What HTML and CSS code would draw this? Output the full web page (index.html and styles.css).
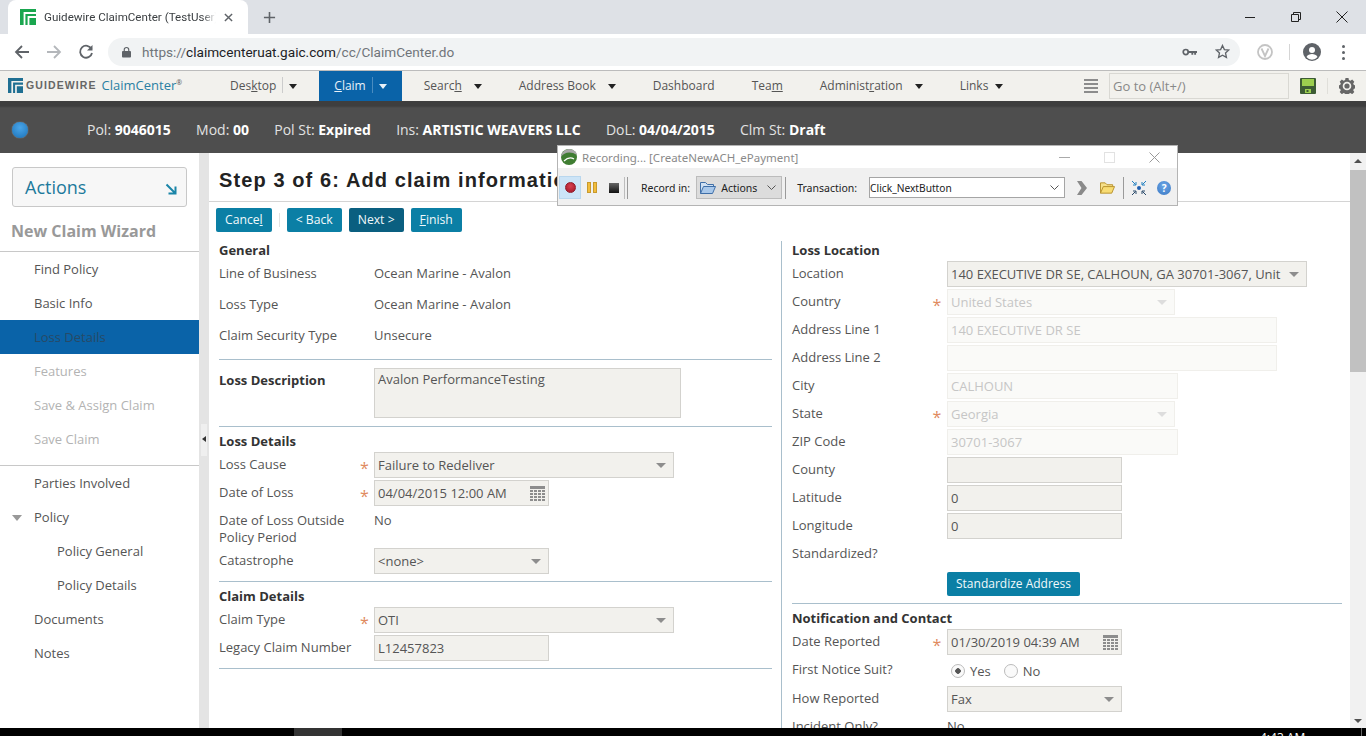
FILE: index.html
```html
<!DOCTYPE html>
<html lang="en">
<head>
    <meta charset="UTF-8">
    <title>Guidewire ClaimCenter (TestUser)</title>
    <link rel="stylesheet" href="styles.css">
</head>
<body>
    <div class="browser-tabs">
        <div class="tab">
            <svg class="favicon" viewBox="0 0 16 16"><rect width="16" height="16" fill="#1aa64f"/><path d="M16 4H4.500V16M8.500 16V8H16" fill="none" stroke="#fff" stroke-width="1.800"/></svg>
            <span class="tab-title">Guidewire ClaimCenter (TestUser)</span>
            <svg class="tab-close" viewBox="0 0 10 10"><path d="M1 1l8 8M9 1l-8 8" stroke="#5f6368" stroke-width="1.600"/></svg>
        </div>
        <svg class="tab-new" viewBox="0 0 14 14"><path d="M7 1v12M1 7h12" stroke="#5f6368" stroke-width="1.700"/></svg>
        <div class="window-btns">
            <svg viewBox="0 0 12 12"><path d="M1 6.500h10" stroke="#222" stroke-width="1"/></svg>
            <svg viewBox="0 0 12 12"><path d="M1.500 3.500h7v7h-7zM3.500 3.500v-2h7v7h-2" fill="none" stroke="#222"/></svg>
            <svg viewBox="0 0 12 12"><path d="M.5.5l11 11M11.500.5l-11 11" stroke="#222"/></svg>
        </div>
    </div>

    <div class="browser-bar">
        <svg class="nav-icon" viewBox="0 0 16 16"><path d="M15 8H2M8 2L2 8l6 6" fill="none" stroke="#5f6368" stroke-width="1.800"/></svg>
        <svg class="nav-icon" viewBox="0 0 16 16"><path d="M1 8h13M8 2l6 6-6 6" fill="none" stroke="#b4b7bb" stroke-width="1.800"/></svg>
        <svg class="nav-icon" viewBox="0 0 16 16"><path d="M13.500 5A6 6 0 1 0 14 9" fill="none" stroke="#5f6368" stroke-width="1.800"/><path d="M14.500 1v5.500H9z" fill="#5f6368"/></svg>
        <div class="omnibox">
            <svg class="lock" viewBox="0 0 10 12"><path d="M2.500 5V3.500a2.500 2.500 0 0 1 5 0V5" fill="none" stroke="#5f6368" stroke-width="1.300"/><rect y="5" width="10" height="7" rx="1" fill="#5f6368"/></svg>
            <span class="url"><span class="url-dim">https://</span>claimcenteruat.gaic.com<span class="url-dim">/cc/ClaimCenter.do</span></span>
            <svg class="key" viewBox="0 0 16 8"><circle cx="4" cy="4" r="2.700" fill="none" stroke="#5f6368" stroke-width="1.800"/><path d="M6 3h10v2h-1v2h-2V5h-1v2h-2V5H6z" fill="#5f6368"/></svg>
            <svg class="bookmark" viewBox="0 0 16 16"><path d="M8 1.500l2 4.400 4.700.5-3.500 3.200 1 4.700L8 11.900l-4.200 2.400 1-4.700L1.300 6.400 6 5.900z" fill="none" stroke="#5f6368" stroke-width="1.400"/></svg>
        </div>
        <svg class="ext" viewBox="0 0 16 16"><circle cx="8" cy="8" r="7" fill="none" stroke="#c4c4c4" stroke-width="1.800"/><path d="M4.500 4.500L8 12l3.500-7.500" fill="none" stroke="#c4c4c4" stroke-width="1.800"/></svg>
        <div class="bar-sep"></div>
        <svg class="avatar" viewBox="0 0 18 18"><circle cx="9" cy="9" r="9" fill="#5f6368"/><circle cx="9" cy="7" r="3" fill="#fff"/><path d="M3.500 14c1-2.300 3.300-3 5.500-3s4.500.7 5.500 3a7 7 0 0 1-11 0z" fill="#fff"/></svg>
        <div class="dots"><i></i><i></i><i></i></div>
    </div>

    <div class="app-nav">
        <div class="brand">
            <svg class="brand-logo" viewBox="0 0 16 16"><rect width="16" height="16" fill="#1f6f92"/><path d="M16 4H4.500V16M8.500 16V8H16" fill="none" stroke="#f2f1ed" stroke-width="1.800"/></svg>
            <span class="brand-gw">GUIDEWIRE</span>
            <span class="brand-cc">ClaimCenter<sup>®</sup></span>
        </div>
        <div class="nav-item"><span>Des<u>k</u>top</span><i class="nav-sep"></i><i class="nav-arrow"></i></div>
        <div class="nav-item active"><span><u>C</u>laim</span><i class="nav-sep"></i><i class="nav-arrow"></i></div>
        <div class="nav-item"><span>Searc<u>h</u></span><i class="nav-arrow"></i></div>
        <div class="nav-item"><span>Address Book</span><i class="nav-arrow"></i></div>
        <div class="nav-item"><span>Dashboard</span></div>
        <div class="nav-item"><span>Tea<u>m</u></span></div>
        <div class="nav-item"><span>Administ<u>r</u>ation</span><i class="nav-arrow"></i></div>
        <div class="nav-item short"><span>Links</span><i class="nav-arrow"></i></div>
        <div class="nav-right">
            <div class="lines"><i></i><i></i><i></i><i></i></div>
            <div class="goto">Go to (Alt+/)</div>
            <svg class="save" viewBox="0 0 16 16"><path d="M0 1a1 1 0 0 1 1-1h14a1 1 0 0 1 1 1v14a1 1 0 0 1-1 1H1a1 1 0 0 1-1-1z" fill="#3d5c35"/><rect x="2" y="1" width="12" height="7" fill="#9ccf4f"/><rect x="5" y="11" width="6" height="4" fill="#9ccf4f"/><rect x="6.500" y="12" width="2" height="2" fill="#3d5c35"/></svg>
            <i class="nav-sep gear-sep"></i>
            <svg class="gear" viewBox="0 0 16 16"><path d="M6.500 0h3l.4 2 1.500.7 1.800-1.100 2.100 2.100-1.100 1.800.7 1.500 2 .4v3l-2 .4-.7 1.500 1.100 1.800-2.100 2.100-1.800-1.100-1.500.7-.4 2h-3l-.4-2-1.500-.7-1.800 1.100-2.100-2.100 1.100-1.800-.7-1.500-2-.4v-3l2-.4.7-1.500-1.100-1.800 2.100-2.100 1.800 1.100 1.500-.7z" fill="#666"/><circle cx="8" cy="8" r="4.300" fill="#f2f1ed"/><circle cx="8" cy="8" r="2.600" fill="#666"/></svg>
        </div>
    </div>

    <div class="info-bar">
        <i class="ball"></i>
        <div class="info-items">
            <span>Pol: <b>9046015</b></span>
            <span>Mod: <b>00</b></span>
            <span>Pol St: <b>Expired</b></span>
            <span>Ins: <b>ARTISTIC WEAVERS LLC</b></span>
            <span>DoL: <b>04/04/2015</b></span>
            <span>Clm St: <b>Draft</b></span>
        </div>
    </div>

    <div class="workspace">
        <div class="sidebar">
            <div class="actions-btn">
                <span>Actions</span>
                <svg viewBox="0 0 12 12"><path d="M1.500 1.500l8 8M10.500 3.500v7h-7" fill="none" stroke="#1a85a8" stroke-width="2"/></svg>
            </div>
            <div class="wizard-title">New Claim Wizard</div>
            <div class="side-group">
                <div class="side-item">Find Policy</div>
                <div class="side-item">Basic Info</div>
                <div class="side-item selected">Loss Details</div>
                <div class="side-item off">Features</div>
                <div class="side-item off">Save &amp; Assign Claim</div>
                <div class="side-item off">Save Claim</div>
            </div>
            <div class="side-item">Parties Involved</div>
            <div class="side-item"><i class="tree-arrow"></i>Policy</div>
            <div class="side-item sub">Policy General</div>
            <div class="side-item sub">Policy Details</div>
            <div class="side-item">Documents</div>
            <div class="side-item">Notes</div>
        </div>

        <div class="splitter"><div class="grip"></div></div>

        <div class="main">
            <h1 class="page-title">Step 3 of 6: Add claim information</h1>
            <div class="button-row">
                <button class="btn">Cance<u>l</u></button>
                <i class="btn-sep"></i>
                <button class="btn">&lt; Back</button>
                <button class="btn primary">Next &gt;</button>
                <button class="btn"><u>F</u>inish</button>
            </div>
            <div class="columns">
                <div class="col-left">
                    <div class="section first">
                        <h2>General</h2>
                        <div class="row tall"><label>Line of Business</label><span class="req"></span><span>Ocean Marine - Avalon</span></div>
                        <div class="row tall"><label>Loss Type</label><span class="req"></span><span>Ocean Marine - Avalon</span></div>
                        <div class="row tall"><label>Claim Security Type</label><span class="req"></span><span>Unsecure</span></div>
                    </div>
                    <div class="section desc">
                        <div class="row"><label class="bold">Loss Description</label><span class="req"></span><div class="field textarea w307">Avalon PerformanceTesting</div></div>
                    </div>
                    <div class="section">
                        <h2>Loss Details</h2>
                        <div class="row"><label>Loss Cause</label><span class="req">*</span><div class="field select w300">Failure to Redeliver</div></div>
                        <div class="row"><label>Date of Loss</label><span class="req">*</span>
                            <div class="field date w175">04/04/2015 12:00 AM
                                <svg class="cal" viewBox="0 0 15 15"><path d="M0 0h15v3H0zM0 4h3v2H0zM4 4h3v2H4zM8 4h3v2H8zM12 4h3v2h-3zM0 7h3v2H0zM4 7h3v2H4zM8 7h3v2H8zM12 7h3v2h-3zM0 10h3v2H0zM4 10h3v2H4zM8 10h3v2H8zM12 10h3v2h-3zM0 13h3v2H0zM4 13h3v2H4zM8 13h3v2H8zM12 13h3v2h-3z" fill="#8d8d8d"/></svg>
                            </div>
                        </div>
                        <div class="row two-line"><label>Date of Loss Outside<br>Policy Period</label><span class="req"></span><span>No</span></div>
                        <div class="row"><label>Catastrophe</label><span class="req"></span><div class="field select w175">&lt;none&gt;</div></div>
                    </div>
                    <div class="section">
                        <h2>Claim Details</h2>
                        <div class="row"><label>Claim Type</label><span class="req">*</span><div class="field select w300">OTI</div></div>
                        <div class="row"><label>Legacy Claim Number</label><span class="req"></span><div class="field w175">L12457823</div></div>
                    </div>
                </div>

                <div class="col-right">
                    <div class="section first">
                        <h2 class="loc-head">Loss Location</h2>
                        <div class="row"><label>Location</label><span class="req"></span><div class="field select w360">140 EXECUTIVE DR SE, CALHOUN, GA 30701-3067, Unit</div></div>
                        <div class="row"><label>Country</label><span class="req">*</span><div class="field select off w228">United States</div></div>
                        <div class="row"><label>Address Line 1</label><span class="req"></span><div class="field off w330">140 EXECUTIVE DR SE</div></div>
                        <div class="row"><label>Address Line 2</label><span class="req"></span><div class="field off w330"></div></div>
                        <div class="row"><label>City</label><span class="req"></span><div class="field off w231">CALHOUN</div></div>
                        <div class="row"><label>State</label><span class="req">*</span><div class="field select off w228">Georgia</div></div>
                        <div class="row"><label>ZIP Code</label><span class="req"></span><div class="field off w231">30701-3067</div></div>
                        <div class="row"><label>County</label><span class="req"></span><div class="field w175"></div></div>
                        <div class="row"><label>Latitude</label><span class="req"></span><div class="field w175">0</div></div>
                        <div class="row"><label>Longitude</label><span class="req"></span><div class="field w175">0</div></div>
                        <div class="row"><label>Standardized?</label></div>
                        <div class="row btn-line"><label></label><span class="req"></span><button class="btn">Standardize Address</button></div>
                    </div>
                    <div class="section">
                        <h2>Notification and Contact</h2>
                        <div class="row"><label>Date Reported</label><span class="req">*</span>
                            <div class="field date w175">01/30/2019 04:39 AM
                                <svg class="cal" viewBox="0 0 15 15"><path d="M0 0h15v3H0zM0 4h3v2H0zM4 4h3v2H4zM8 4h3v2H8zM12 4h3v2h-3zM0 7h3v2H0zM4 7h3v2H4zM8 7h3v2H8zM12 7h3v2h-3zM0 10h3v2H0zM4 10h3v2H4zM8 10h3v2H8zM12 10h3v2h-3zM0 13h3v2H0zM4 13h3v2H4zM8 13h3v2H8zM12 13h3v2h-3z" fill="#8d8d8d"/></svg>
                            </div>
                        </div>
                        <div class="row radios"><label>First Notice Suit?</label><span class="req"></span>
                            <i class="radio checked"></i><span class="radio-text">Yes</span>
                            <i class="radio"></i><span>No</span>
                        </div>
                        <div class="row"><label>How Reported</label><span class="req"></span><div class="field select w175">Fax</div></div>
                        <div class="row"><label>Incident Only?</label><span class="req"></span><span>No</span></div>
                    </div>
                </div>
            </div>
        </div>

        <div class="scrollbar">
            <i class="sb-up"></i>
            <div class="sb-thumb"></div>
            <i class="sb-down"></i>
        </div>
    </div>

    <div class="taskbar">
        <div class="task-active"></div>
        <span class="clock">4:43 AM</span>
        <i class="task-edge"></i>
    </div>

    <!-- floating recorder window -->
    <div class="recorder">
        <div class="rec-title">
            <svg class="rec-logo" viewBox="0 0 16 16"><circle cx="8" cy="8" r="8" fill="#3f7d32"/><path d="M0 8c3-5 10-6 16-2 0-3-4-6-8-6S0 4 0 8z" fill="#a8a8a8"/><path d="M3 12c3-3 7-4 10-2" fill="none" stroke="#fff" stroke-width="1.200"/></svg>
            <span>Recording... [CreateNewACH_ePayment]</span>
            <div class="rec-win">
                <svg viewBox="0 0 11 11"><path d="M0 5.500h11" stroke="#aaa"/></svg>
                <svg viewBox="0 0 11 11"><rect x=".5" y=".5" width="10" height="10" fill="none" stroke="#e2e2e2"/></svg>
                <svg viewBox="0 0 11 11"><path d="M.5.5l10 10M10.500.5l-10 10" stroke="#999"/></svg>
            </div>
        </div>
        <div class="rec-tools">
            <div class="rec-btn on"><i class="rec-dot"></i></div>
            <div class="rec-btn"><i class="rec-pause"></i><i class="rec-pause"></i></div>
            <div class="rec-btn"><i class="rec-stop"></i></div>
            <i class="rec-sep double"></i>
            <span class="rec-label">Record in:</span>
            <div class="rec-combo">
                <svg class="folder" viewBox="0 0 16 14"><path d="M.5 12.500V1.500h5l2 2h6v2" fill="#cfe0f2" stroke="#3f6fa8"/><path d="M.5 12.500l3-7h12l-3 7z" fill="#a9c8ea" stroke="#3f6fa8"/></svg>
                <span>Actions</span>
                <svg class="chev" viewBox="0 0 9 5"><path d="M.5.500l4 4 4-4" fill="none" stroke="#555"/></svg>
            </div>
            <i class="rec-sep"></i>
            <span class="rec-label trans">Transaction:</span>
            <div class="rec-input">
                <span>Click_NextButton</span>
                <svg class="chev" viewBox="0 0 9 5"><path d="M.5.500l4 4 4-4" fill="none" stroke="#555"/></svg>
            </div>
            <svg class="rec-next" viewBox="0 0 10 16"><path d="M0 1h4.500l5.500 7-5.500 7H0l4.500-7z" fill="#8a8a8a"/></svg>
            <svg class="rec-open" viewBox="0 0 16 14"><path d="M.5 12.500V1.500h5l2 2h6v2" fill="#f6e08a" stroke="#b58f2a"/><path d="M.5 12.500l3-7h12l-3 7z" fill="#f8dc73" stroke="#b58f2a"/></svg>
            <i class="rec-sep last"></i>
            <svg class="rec-focus" viewBox="0 0 16 16"><circle cx="8" cy="8" r="2" fill="#1f5fb0"/><path d="M1 1l3.500 3.500M5 2v3H2M15 1l-3.500 3.500M11 2v3h3" fill="none" stroke="#1f7fc0"/><path d="M1 15l3.500-3.500M5 14v-3H2M15 15l-3.500-3.500M11 14v-3h3" fill="none" stroke="#2a4a6a"/></svg>
            <div class="rec-help">?</div>
        </div>
    </div>
</body>
</html>
```

FILE: styles.css
```css
* {
    box-sizing: border-box;
}

html, body {
    margin: 0;
    padding: 0;
    height: 736px;
    overflow: hidden;
}

body {
    position: relative;
    font-family: "Open Sans", Arial, sans-serif;
    font-size: 13px;
    color: #555;
    background: #fff;
    display: flex;
    flex-direction: column;
}

i {
    display: block;
    font-style: normal;
}

/* browser chrome */
.browser-tabs {
    height: 34px;
    flex: none;
    background: #dee1e6;
    display: flex;
    align-items: center;
}

.tab {
    width: 240px;
    height: 34px;
    margin-left: 8px;
    background: #fff;
    border-radius: 8px 8px 0 0;
    display: flex;
    align-items: center;
    padding-left: 12px;
}

.favicon {
    width: 16px;
    height: 16px;
    flex: none;
}

.tab-title {
    width: 172px;
    margin-left: 8px;
    overflow: hidden;
    white-space: nowrap;
    font-family: Roboto, sans-serif;
    font-size: 11.600px;
    color: #3c4043;
    -webkit-mask-image: linear-gradient(to right, #000 92%, transparent);
    mask-image: linear-gradient(to right, #000 92%, transparent);
}

.tab-close {
    width: 9px;
    height: 9px;
    margin-left: 8px;
}

.tab-new {
    width: 13px;
    height: 13px;
    margin-left: 15px;
}

.window-btns {
    margin-left: auto;
    display: flex;
    gap: 34px;
    padding-right: 18px;
}

.window-btns svg {
    width: 12px;
    height: 12px;
}

.browser-bar {
    height: 37px;
    flex: none;
    background: #fff;
    border-bottom: 1px solid #bcbcbc;
    display: flex;
    align-items: center;
    padding-left: 14px;
}

.nav-icon {
    width: 16px;
    height: 16px;
    margin-right: 16px;
}

.omnibox {
    width: 1132px;
    height: 28px;
    margin-left: -2px;
    margin-top: -1px;
    background: #f1f3f4;
    border-radius: 14px;
    display: flex;
    align-items: center;
    padding-left: 14px;
}

.lock {
    width: 9px;
    height: 12px;
}

.url {
    margin-left: 11px;
    font-family: Roboto, sans-serif;
    font-size: 13.600px;
    color: #202124;
}

.url-dim {
    color: #70757a;
}

.key {
    width: 15px;
    height: 8px;
    margin-left: auto;
}

.bookmark {
    width: 15px;
    height: 15px;
    margin: 0 10px 0 18px;
}

.ext {
    width: 16px;
    height: 16px;
    margin-left: 17px;
}

.bar-sep {
    width: 1px;
    height: 16px;
    background: #d5d5d5;
    margin-left: 16px;
}

.avatar {
    width: 18px;
    height: 18px;
    margin-left: 13px;
}

.dots {
    margin-left: 21px;
}

.dots i {
    width: 3px;
    height: 3px;
    margin: 3px 0;
    background: #5f6368;
    border-radius: 50%;
}

/* app nav */
.app-nav {
    height: 30px;
    flex: none;
    background: #f2f1ed;
    display: flex;
    align-items: stretch;
    gap: 7px;
    padding-right: 11px;
    color: #555;
    font-size: 12px;
}

.brand {
    width: 208px;
    flex: none;
    display: flex;
    align-items: center;
    padding-left: 8px;
    margin-top: -2px;
}

.brand-logo {
    width: 15px;
    height: 15px;
    flex: none;
}

.brand-gw {
    margin-left: 3px;
    font-family: "Liberation Sans", sans-serif;
    font-size: 10.500px;
    font-weight: bold;
    letter-spacing: 1.100px;
    color: #666;
}

.brand-cc {
    margin-left: 5px;
    font-size: 13px;
    color: #2a7fa3;
}

.brand-cc sup {
    font-size: 7px;
    line-height: 0;
    color: #555;
}

.nav-item {
    display: flex;
    align-items: center;
    padding: 0 15px 2px;
    white-space: nowrap;
}

.nav-item.active {
    background: #0a63a8;
    color: #e8f1f8;
}

.nav-sep {
    width: 1px;
    height: 16px;
    background: #ccc;
    margin: 0 6px;
}

.nav-item.active .nav-sep {
    background: #4a8cc0;
}

.nav-arrow {
    width: 0;
    height: 0;
    margin-top: 2px;
    margin-left: 12px;
    border-left: 4px solid transparent;
    border-right: 4px solid transparent;
    border-top: 5px solid #222;
}

.nav-sep + .nav-arrow {
    margin-left: 0;
}

.nav-item.active .nav-arrow {
    border-top-color: #e8f1f8;
}

.nav-item.short .nav-arrow {
    margin-left: 7px;
}

.nav-right {
    margin-left: auto;
    display: flex;
    align-items: center;
}

.lines i {
    width: 14px;
    height: 2px;
    margin: 2px 0;
    background: #8c8c8c;
}

.goto {
    width: 180px;
    height: 26px;
    margin-left: 11px;
    border: 1px solid #d9d8d3;
    background: #f2f1ed;
    padding: 3px 3px;
    color: #888;
    font-size: 13px;
}

.save {
    width: 16px;
    height: 16px;
    margin-left: 11px;
}

.gear-sep {
    margin: 0 11px;
    background: #e0dfda;
}

.gear {
    width: 16px;
    height: 16px;
}

/* policy info bar */
.info-bar {
    height: 52px;
    flex: none;
    background: linear-gradient(#3e3e3e 0, #3e3e3e 5px, #4e4e4e 7px);
    display: flex;
    align-items: center;
    padding: 5px 0 0 12px;
    color: #e2e2e2;
    font-size: 14px;
}

.ball {
    width: 16px;
    height: 16px;
    border-radius: 50%;
    background: radial-gradient(circle at 50% 35%, #4aa5e8, #1b72b8);
    box-shadow: 0 0 1px #bcd;
}

.info-items {
    margin-left: 59px;
    display: flex;
    gap: 25.300px;
}

.info-items b {
    color: #fff;
}

/* page body */
.workspace {
    flex: 1;
    min-height: 0;
    display: flex;
}

.sidebar {
    width: 199px;
    flex: none;
    padding-top: 14px;
    color: #555;
}

.actions-btn {
    width: 175px;
    height: 40px;
    margin-left: 12px;
    background: #f7f7f7;
    border: 1px solid #c8c8c8;
    border-radius: 3px;
    display: flex;
    align-items: center;
    justify-content: space-between;
    padding: 0 9px 0 12px;
    font-size: 18px;
    color: #1c7a9c;
}

.actions-btn svg {
    width: 12px;
    height: 12px;
    margin-top: 4px;
}

.wizard-title {
    height: 45px;
    padding: 13px 0 0 11px;
    border-bottom: 1px solid #c8c8c8;
    font-size: 16px;
    font-weight: bold;
    color: #999;
}

.side-group {
    padding-bottom: 9px;
    border-bottom: 1px solid #c8c8c8;
}

.side-item {
    position: relative;
    height: 34px;
    padding-left: 34px;
    line-height: 34px;
}

.side-item.sub {
    padding-left: 57px;
}

.side-item.selected {
    background: #0a63a8;
    color: #274a66;
}

.side-item.off {
    color: #b3b3b3;
}

.tree-arrow {
    position: absolute;
    left: 12px;
    top: 15px;
    width: 0;
    height: 0;
    border-left: 5px solid transparent;
    border-right: 5px solid transparent;
    border-top: 6px solid #999;
}

.splitter {
    width: 10px;
    flex: none;
    background: #e4e4e4;
    position: relative;
}

.grip {
    position: absolute;
    left: 2px;
    top: 271px;
    width: 6px;
    height: 32px;
    background: #efefef;
}

.grip:after {
    content: "";
    position: absolute;
    left: 1px;
    top: 12px;
    border-top: 3px solid transparent;
    border-bottom: 3px solid transparent;
    border-right: 4px solid #333;
}

.main {
    flex: 1;
    min-width: 0;
    overflow: hidden;
}

.page-title {
    height: 49px;
    margin: 0;
    padding: 13px 0 0 10px;
    border-bottom: 1px solid #d4d4d4;
    font-family: "Liberation Sans", Arial, sans-serif;
    font-size: 20px;
    line-height: 28px;
    letter-spacing: 1.100px;
    font-weight: bold;
    color: #222;
    white-space: nowrap;
}

.button-row {
    display: flex;
    align-items: flex-start;
    gap: 7px;
    padding: 6px 0 0 7px;
    height: 39px;
}

.btn {
    height: 24px;
    padding: 0 9px 2px;
    border: none;
    border-radius: 2px;
    background: #0b7fa5;
    color: #f2f9fb;
    font-family: "Open Sans", Arial, sans-serif;
    font-size: 12.200px;
    white-space: nowrap;
}

.btn.primary {
    background: #0a5f80;
}

.btn-sep {
    width: 1px;
    height: 14px;
    margin-top: 5px;
    background: #e2e2e2;
}

.columns {
    display: flex;
    padding-left: 10px;
}

.col-left {
    width: 553px;
    flex: none;
}

.col-right {
    width: 561px;
    flex: none;
    margin-left: 9px;
    padding-left: 10px;
    border-left: 1px solid #a9bfcc;
}

.section {
    padding: 5px 0;
    border-bottom: 1px solid #a9bfcc;
}

.section.first {
    padding: 0 0 8px;
}

.section.desc {
    padding: 8px 0;
}

h2 {
    margin: 0 0 2px;
    height: 18px;
    font-size: 13px;
    line-height: 18px;
    font-weight: bold;
    color: #333;
}

.section.first h2 {
    height: 17px;
    margin: 0;
}

.section.first .loc-head {
    height: 18px;
    margin-bottom: 2px;
}

.row {
    display: flex;
    align-items: flex-start;
    min-height: 28px;
    line-height: 18px;
    white-space: nowrap;
}

.row > label {
    width: 136px;
    flex: none;
    padding-top: 3px;
    line-height: 18px;
}

.row > span {
    padding-top: 3px;
}

.row label.bold {
    font-weight: bold;
    color: #333;
}

.row.tall {
    height: 31px;
}

.row.tall > label,
.row.tall > span {
    padding-top: 6px;
}

.row.two-line {
    height: 40px;
}

.row.two-line > label {
    padding-top: 4px;
    line-height: 17px;
}

.row.btn-line {
    min-height: 0;
    height: 24px;
    margin: 3px 0 -1px;
}

.row.btn-line .btn {
    font-size: 12px;
}

.row.radios {
    min-height: 29px;
}

.row.radios > span {
    padding-top: 5px;
}

.row > .req {
    width: 19px;
    flex: none;
    color: #e08a5e;
    text-align: center;
    font-size: 16px;
    padding-top: 7px;
}

.col-right .row > label {
    width: 135px;
}

.col-right .row > .req {
    width: 20px;
}

.field {
    position: relative;
    height: 26px;
    padding: 3px 3px 0;
    background: #f2f1ed;
    border: 1px solid #d3d2ce;
    line-height: 18px;
    color: #555;
    overflow: hidden;
}

.field.off {
    background: #fafaf8;
    border-color: #f0efeb;
    color: #c6c6c6;
}

.field.textarea {
    height: 50px;
    padding-top: 1px;
}

.field.select:after {
    content: "";
    position: absolute;
    right: 7px;
    top: 10px;
    border-left: 5px solid transparent;
    border-right: 5px solid transparent;
    border-top: 5px solid #8d8d8d;
}

.field.select.off:after {
    border-top-color: #ddd;
}

.cal {
    position: absolute;
    right: 3px;
    top: 5px;
    width: 15px;
    height: 15px;
}

.w175 { width: 175px; }
.w228 { width: 228px; }
.w231 { width: 231px; }
.w300 { width: 300px; }
.w307 { width: 307px; }
.w330 { width: 330px; }
.w360 { width: 360px; }

.radio {
    width: 14px;
    height: 14px;
    margin-top: 7px;
    margin-right: 5px;
    border: 1px solid #bbb;
    border-radius: 50%;
    background: #fafafa;
    flex: none;
}

.radio.checked {
    margin-left: 4px;
    background: radial-gradient(circle, #555 0, #555 2.500px, #fafafa 3px);
}

.radio-text {
    margin-right: 13px;
}

.scrollbar {
    width: 16px;
    flex: none;
    background: #f1f1f1;
    position: relative;
}

.sb-thumb {
    position: absolute;
    top: 17px;
    left: 0;
    width: 16px;
    height: 202px;
    background: #c1c1c1;
}

.sb-up, .sb-down {
    position: absolute;
    left: 4px;
    width: 0;
    height: 0;
    border-left: 4px solid transparent;
    border-right: 4px solid transparent;
}

.sb-up {
    top: 6px;
    border-bottom: 4px solid #505050;
}

.sb-down {
    bottom: 5px;
    border-top: 4px solid #505050;
}

.taskbar {
    height: 8px;
    flex: none;
    background: #000;
    position: relative;
    overflow: hidden;
}

.task-active {
    position: absolute;
    left: 294px;
    top: 0;
    width: 48px;
    height: 8px;
    background: #333;
}

.clock {
    position: absolute;
    left: 1260px;
    top: 2px;
    color: #fff;
    font-size: 12px;
    line-height: 16px;
}

.task-edge {
    position: absolute;
    left: 1361px;
    top: 0;
    width: 1px;
    height: 8px;
    background: #666;
}

/* recorder window */
.recorder {
    position: absolute;
    left: 557px;
    top: 145px;
    width: 621px;
    height: 61px;
    background: #f0f0f0;
    border: 1px solid #b4b4b4;
    font-family: "Noto Sans", sans-serif;
    font-size: 10.500px;
    color: #222;
}

.rec-title {
    height: 22px;
    background: #fff;
    display: flex;
    align-items: center;
    padding-left: 3px;
    color: #8a8a8a;
    font-size: 11.500px;
}

.rec-logo {
    width: 16px;
    height: 16px;
    margin-right: 5px;
}

.rec-win {
    margin-left: auto;
    display: flex;
    gap: 34px;
    padding-right: 17px;
}

.rec-win svg {
    width: 11px;
    height: 11px;
}

.rec-tools {
    height: 37px;
    padding-top: 2px;
    display: flex;
    align-items: center;
}

.rec-btn {
    width: 22px;
    height: 23px;
    flex: none;
    display: flex;
    align-items: center;
    justify-content: center;
    gap: 2px;
}

.rec-btn.on {
    background: #cce4f7;
    border: 1px solid #b9d7ee;
    margin-left: 1px;
}

.rec-dot {
    width: 11px;
    height: 11px;
    border-radius: 50%;
    background: radial-gradient(circle at 50% 35%, #d84050, #a01525);
    border: 1px solid #8f1c2a;
}

.rec-pause {
    width: 4px;
    height: 11px;
    background: #f2bd3c;
    border: 1px solid #c89a2e;
}

.rec-stop {
    width: 10px;
    height: 10px;
    background: linear-gradient(#666, #111);
}

.rec-sep {
    width: 1px;
    height: 22px;
    background: #9a9a9a;
    flex: none;
    margin: 0 3px;
}

.rec-sep.double {
    margin-left: 2px;
    margin-right: 13px;
    box-shadow: -3px 0 0 #bdbdbd;
}

.rec-label.trans {
    margin-left: 8px;
}

.rec-combo {
    width: 86px;
    height: 23px;
    margin-left: 6px;
    flex: none;
    background: #dcdcdc;
    border: 1px solid #bcbcbc;
    display: flex;
    align-items: center;
    padding: 0 5px 0 3px;
}

.folder {
    width: 16px;
    height: 14px;
    margin-right: 5px;
}

.chev {
    width: 9px;
    height: 5px;
    margin-left: auto;
}

.rec-input {
    width: 196px;
    height: 21px;
    margin-left: 12px;
    flex: none;
    background: #fff;
    border: 1px solid #a5a5a5;
    display: flex;
    align-items: center;
    padding: 0 5px 0 0;
    font-size: 10.200px;
}

.rec-next {
    width: 10px;
    height: 16px;
    margin-left: 12px;
    flex: none;
}

.rec-open {
    width: 15px;
    height: 14px;
    margin-left: 13px;
    flex: none;
}

.rec-sep.last {
    margin: 0 7px 0 8px;
}

.rec-focus {
    width: 16px;
    height: 16px;
    flex: none;
}

.rec-help {
    width: 14px;
    height: 14px;
    flex: none;
    margin-left: 10px;
    border-radius: 50%;
    background: radial-gradient(circle at 50% 35%, #6ba6e6, #3a78c4);
    color: #fff;
    font-size: 10px;
    font-weight: bold;
    line-height: 14px;
    text-align: center;
}
```
